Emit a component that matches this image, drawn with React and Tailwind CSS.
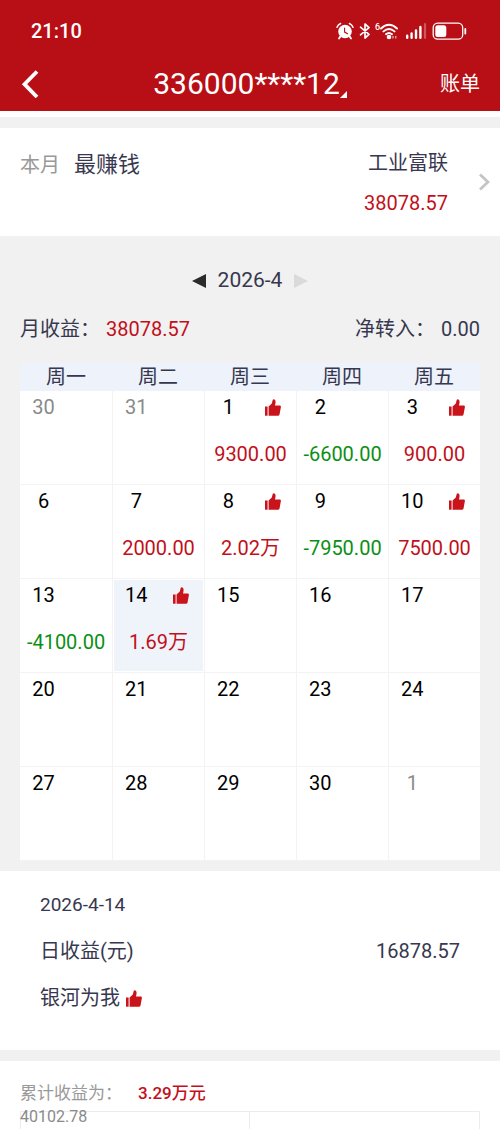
import React, { useState } from "react";

const WEEKDAYS = ["周一", "周二", "周三", "周四", "周五"];

const WEEKS = [
  [
    { day: 30, outside: true },
    { day: 31, outside: true },
    { day: 1, value: "9300.00", liked: true },
    { day: 2, value: "-6600.00" },
    { day: 3, value: "900.00", liked: true },
  ],
  [
    { day: 6 },
    { day: 7, value: "2000.00" },
    { day: 8, value: "2.02万", liked: true },
    { day: 9, value: "-7950.00" },
    { day: 10, value: "7500.00", liked: true },
  ],
  [
    { day: 13, value: "-4100.00" },
    { day: 14, value: "1.69万", liked: true },
    { day: 15 },
    { day: 16 },
    { day: 17 },
  ],
  [{ day: 20 }, { day: 21 }, { day: 22 }, { day: 23 }, { day: 24 }],
  [
    { day: 27 },
    { day: 28 },
    { day: 29 },
    { day: 30 },
    { day: 1, outside: true },
  ],
];

function ThumbIcon() {
  return (
    <svg className="w-4 h-[17px] shrink-0" viewBox="0 0 16 17" aria-hidden="true">
      <path fill="#c9141c" d="M0 7.5h2.6v9.2H0z" />
      <path
        fill="#c9141c"
        d="M3.6 7.6 6.8 4.4 7.7 1Q8 .1 8.9.2q1.6.3 1.7 2.3 0 1.7-.6 4h4.7q1.4.1 1.2 1.5l-1.3 7.2q-.3 1.5-1.7 1.5H3.600z"
      />
    </svg>
  );
}

function StatusIcons() {
  return (
    <div className="flex items-center text-white">
      {/* Alarm */}
      <svg className="w-[18px] h-[18px]" viewBox="0 0 18 18" aria-hidden="true">
        <circle cx="9" cy="9.5" r="6.8" fill="currentColor" />
        <path d="M4.500 14.200 3 16.600M13.500 14.200l1.500 2.400" stroke="currentColor" strokeWidth="1.8" strokeLinecap="round" />
        <path d="M1 5.200Q2 2.600 4.600 1.500M17 5.200Q16 2.600 13.400 1.500" fill="none" stroke="currentColor" strokeWidth="1.5" strokeLinecap="round" />
        <path d="M8.600 6v4.100l3 1.600" fill="none" stroke="#b70f15" strokeWidth="1.1" strokeLinecap="round" />
      </svg>
      {/* Bluetooth */}
      <svg className="w-3 h-[18px] ml-[5px]" viewBox="0 0 12 18" aria-hidden="true">
        <path d="M1.500 5.200 10 12.400 6 16V2l4 3.600-8.500 7.200" fill="none" stroke="currentColor" strokeWidth="1.7" strokeLinejoin="round" strokeLinecap="round" />
      </svg>
      {/* Wi-Fi 6 */}
      <span className="self-start ml-1 text-[9px] leading-[10px] font-medium">6</span>
      <svg className="w-[18px] h-[18px]" viewBox="0 0 18 18" aria-hidden="true">
        <path d="M1 6.500Q9-1 17 6.500M3.500 9.400q5.500-5 11 0M6 12.200q3-2.600 6 0" fill="none" stroke="currentColor" strokeWidth="1.9" strokeLinecap="round" />
        <circle cx="9" cy="15" r="2.3" fill="currentColor" />
        <path d="M13 14v2.600M15.800 14v2.600" stroke="currentColor" strokeWidth="1.2" opacity=".7" />
      </svg>
      {/* Signal */}
      <svg className="w-[22px] h-[18px] ml-[7px]" viewBox="0 0 22 18" aria-hidden="true">
        <path d="M2.200 13.800v2M6.600 11.500v4.300M11 8.500v7.300M15.400 5v10.800" stroke="currentColor" strokeWidth="2.4" strokeLinecap="round" />
        <path d="M20 2v13.800" stroke="currentColor" strokeWidth="2.2" strokeLinecap="round" opacity=".3" />
      </svg>
      {/* Battery */}
      <svg className="w-9 h-[18px] ml-[5px]" viewBox="0 0 36 18" aria-hidden="true">
        <rect x="1.2" y="1.2" width="29.5" height="16" rx="4.5" fill="none" stroke="currentColor" strokeWidth="1.3" />
        <rect x="3.3" y="3.3" width="11" height="11.8" rx="2.5" fill="currentColor" />
        <path d="M33.300 7v4.500" stroke="currentColor" strokeWidth="1.8" strokeLinecap="round" />
      </svg>
    </div>
  );
}

function Header() {
  return (
    <header className="bg-[#b70f15] text-white">
      <div className="flex items-center justify-between h-[62px] pl-[31px] pr-8">
        <span className="text-xl font-medium">21:10</span>
        <StatusIcons />
      </div>
      <div className="grid grid-cols-[1fr_auto_1fr] items-center h-[49px] pb-[6px] px-5">
        <button type="button" aria-label="返回" className="justify-self-start">
          <svg className="w-5 h-7" viewBox="0 0 20 28" fill="none" aria-hidden="true">
            <path d="M17 1.500 4.500 14.200 17 27" stroke="currentColor" strokeWidth="3.8" />
          </svg>
        </button>
        <button type="button" className="flex items-end text-[30px] leading-9">
          336000****12
          <svg className="w-[7px] h-[7px] mb-1" viewBox="0 0 7 7" aria-hidden="true">
            <path d="M7 0v7H0z" fill="currentColor" />
          </svg>
        </button>
        <button type="button" className="justify-self-end text-xl">
          账单
        </button>
      </div>
    </header>
  );
}

function DayCell({ item, selected, onSelect }) {
  const isLoss = item.value && item.value.startsWith("-");

  return (
    <td className="p-0 border-l border-b border-[#f3f3f3] first:border-l-0">
      <button
        type="button"
        onClick={onSelect}
        className={`flex flex-col w-full h-[93px] border border-white ${
          selected ? "bg-[#eff3fa]" : "bg-white"
        }`}
      >
        <span className="grid grid-cols-2 items-center justify-items-center w-full h-[30px]">
          <span className={item.outside ? "text-[#8a8a8a]" : "text-black"}>{item.day}</span>
          {item.liked && <ThumbIcon />}
        </span>
        <span
          className={`w-full mt-4 text-center leading-8 whitespace-nowrap ${
            isLoss ? "text-[#0a8f14]" : "text-[#c20f1a]"
          }`}
        >
          {item.value}
        </span>
      </button>
    </td>
  );
}

function Calendar() {
  const [selected, setSelected] = useState("2-1");

  return (
    <section className="bg-[#f1f1f1] px-5 pt-[27px] pb-[10px]">
      <div className="flex items-center justify-center gap-3 h-9 text-[21px] text-[#37384f]">
        <button type="button" aria-label="上个月">
          <svg className="w-[14px] h-[14px]" viewBox="0 0 14 14" aria-hidden="true">
            <path d="M14 0v14L0 7z" fill="#2b2b2b" />
          </svg>
        </button>
        <span>2026-4</span>
        <button type="button" aria-label="下个月">
          <svg className="w-[14px] h-[14px]" viewBox="0 0 14 14" aria-hidden="true">
            <path d="M0 0v14l14-7z" fill="#dadada" />
          </svg>
        </button>
      </div>

      <div className="flex items-center justify-between mt-3 h-9 text-xl text-[#37384f]">
        <p>
          月收益：<span className="ml-[6px] text-[#c20f1a]">38078.57</span>
        </p>
        <p>
          净转入：<span className="ml-[6px]">0.00</span>
        </p>
      </div>

      <table className="w-full mt-4 table-fixed border-separate border-spacing-0 text-xl bg-white">
        <thead>
          <tr className="bg-[#edf2fb] text-[#37384f]">
            {WEEKDAYS.map((name) => (
              <th key={name} scope="col" className="p-0 h-7 leading-7 font-normal">
                {name}
              </th>
            ))}
          </tr>
        </thead>
        <tbody>
          {WEEKS.map((week, row) => (
            <tr key={row}>
              {week.map((item, col) => (
                <DayCell
                  key={col}
                  item={item}
                  selected={selected === `${row}-${col}`}
                  onSelect={() => setSelected(`${row}-${col}`)}
                />
              ))}
            </tr>
          ))}
        </tbody>
      </table>
    </section>
  );
}

export default function App() {
  return (
    <div
      lang="zh-CN"
      className="min-h-screen bg-white font-['Roboto','Noto_Sans_CJK_SC',sans-serif] text-[#37384f]"
    >
      <Header />

      <section className="mt-[6px] border-t-[11px] border-[#f1f1f1] flex items-start h-[119px] pl-5 pr-[10px] pt-[21px] text-xl leading-8">
        <span className="text-[#999999]">本月</span>
        <span className="ml-[14px] text-[22px]">最赚钱</span>
        <div className="ml-auto text-right">
          <p className="leading-7">工业富联</p>
          <p className="mt-3 leading-7 text-[#c20f1a]">38078.57</p>
        </div>
        <button type="button" aria-label="查看详情" className="ml-[30px] mt-6">
          <svg className="w-3 h-[18px]" viewBox="0 0 12 18" fill="none" aria-hidden="true">
            <path d="m2 1.500 8 7.500-8 7.500" stroke="#c4c4c4" strokeWidth="2.8" />
          </svg>
        </button>
      </section>

      <Calendar />

      {/* Selected day detail */}
      <section className="px-10 pt-5 pb-9 text-xl">
        <p className="text-[19px] leading-7">2026-4-14</p>
        <div className="flex items-center justify-between mt-4 h-8">
          <span>日收益(元)</span>
          <span>16878.57</span>
        </div>
        <p className="flex items-center gap-[6px] mt-[15px] h-8">
          银河为我
          <ThumbIcon />
        </p>
      </section>

      {/* Accumulated profit chart */}
      <section className="border-t-[11px] border-[#f1f1f1] px-5 pt-[21px]">
        <p className="flex items-center h-6 text-[17px] text-[#999999]">
          累计收益为：
          <span className="ml-4 font-medium text-[#c20f1a]">3.29万元</span>
        </p>
        <div className="relative mt-[5px]">
          <svg className="block w-full h-[18px]" viewBox="0 0 460 18" preserveAspectRatio="none" aria-hidden="true">
            <path d="M.5 18V.5h459V18M229.500 0v18" fill="none" stroke="#ececec" />
          </svg>
          <span className="absolute left-0 top-0 text-base leading-3 text-[#8a8a8a]">40102.78</span>
        </div>
      </section>
    </div>
  );
}
